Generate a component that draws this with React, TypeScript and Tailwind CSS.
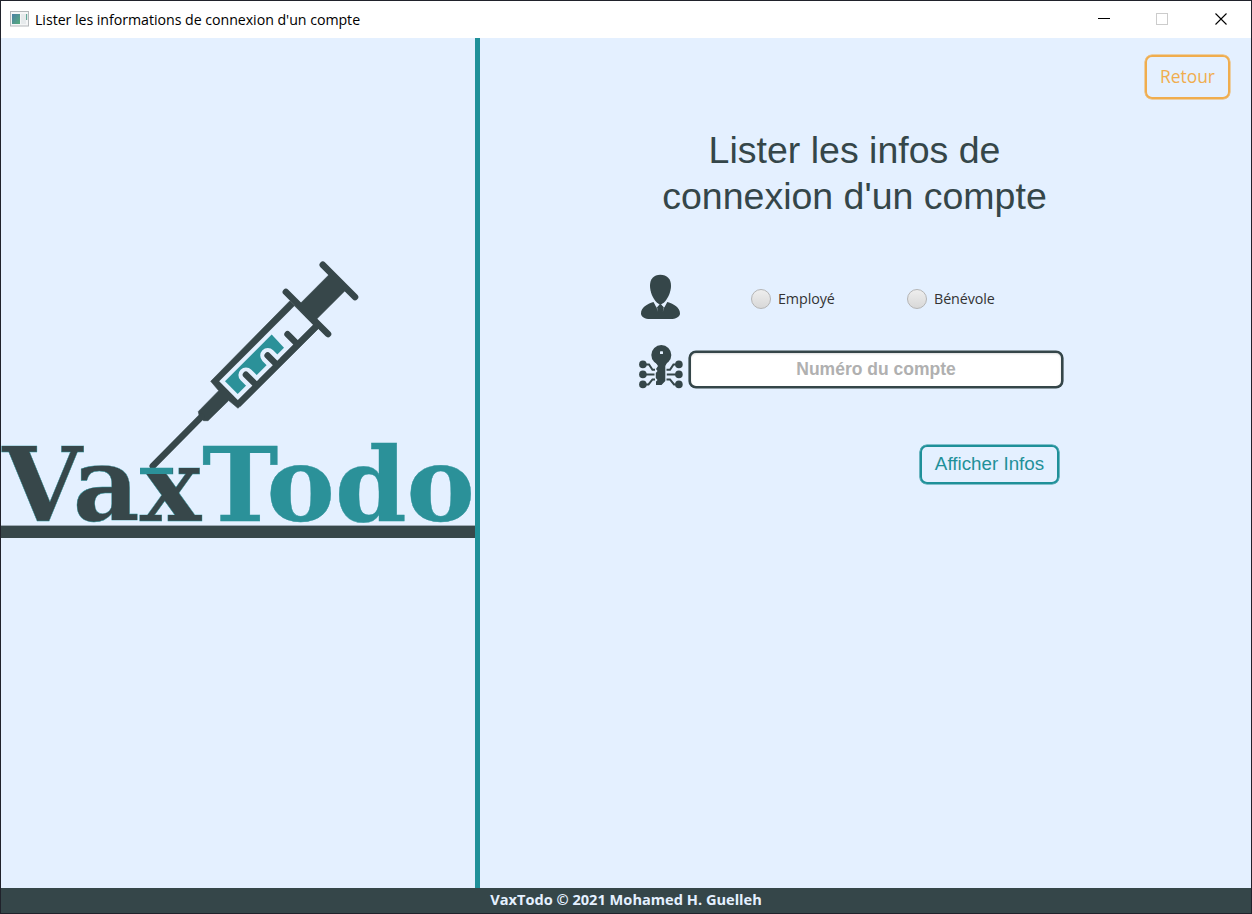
import React from "react";

const DARK = "#37474a";
const SLATE = "#354649";
const TEAL = "#2b9199";
const SKY = "#e4f0ff";

function AppIcon() {
  return (
    <svg width="19" height="16" viewBox="0 0 19 16" className="mb-[2px] shrink-0">
      <defs>
        <linearGradient id="app" x1="0" y1="0" x2="1" y2="1">
          <stop offset="0" stopColor="#4a7fa5" />
          <stop offset="1" stopColor="#57ad7c" />
        </linearGradient>
      </defs>
      <rect x="0.5" y="0.5" width="18" height="14.5" fill="#f5f6f7" stroke="#b4b8bb" />
      <rect x="2" y="3" width="8" height="10" fill="url(#app)" />
      <rect x="11" y="3" width="5" height="10" fill="#e6eaec" />
      <rect x="16" y="3" width="1.2" height="6" fill="#63a899" />
    </svg>
  );
}

function Logo() {
  return (
    <svg width="474" height="300" viewBox="1 250 474 300" className="block">
      <g fill={DARK} stroke={DARK} strokeWidth="0.6">
        <polygon points="330.2,273.5 346.5,289.2 316.2,319.5 300,303.8" />
        <polygon points="290,300.7 210.7,381.3 218.7,390.7 198.3,411.5 199,415 203.5,420.7 208,420.7 228.7,400.5 238,408.3 318.7,328.3" />
      </g>
      <polygon points="294.4,305.9 219.2,381.3 238,400.3 313.2,325" fill={SKY} />
      <g stroke={DARK} strokeLinecap="round" strokeWidth="6.6">
        <path d="M322.8 264.8 L355 297 M285.9 292 L328 334" />
        <path d="M201.5 416.8 L152.8 466" />
      </g>
      <polygon points="271.7,334.6 225,381.3 237.7,394 284,347.7" fill={TEAL} />
      <g stroke={SKY} strokeWidth="15.2" strokeLinecap="round">
        <path d="M246 375 L252 381 M267.8 355.6 L273.8 361.6" />
      </g>
      <path d="M238 404.5 L316.2 326.3" stroke={DARK} strokeWidth="6.4" />
      <g stroke={DARK} strokeWidth="6.4" strokeLinecap="round">
        <path d="M245.9 374.7 L255 383.8 M267.6 355.5 L276.6 364.5 M287.5 334.2 L297.5 344.2" />
      </g>
      <g
        fontFamily="'DejaVu Serif'"
        fontWeight="700"
        fontSize="102.5"
        stroke={TEAL}
        strokeWidth="0.4"
      >
        <text x="2.2" y="520.8" textLength="199" lengthAdjust="spacingAndGlyphs" fill={DARK}>
          Vax
        </text>
        <text x="202" y="520.8" textLength="273" lengthAdjust="spacingAndGlyphs" fill={TEAL}>
          Todo
        </text>
      </g>
      <rect x="140" y="468" width="32.5" height="6" fill={TEAL} />
      <rect x="1" y="525.6" width="474" height="12.4" fill={DARK} />
    </svg>
  );
}

function PersonIcon() {
  return (
    <svg width="40" height="46" viewBox="640 274 40 46" fill={SLATE}>
      <path d="M660.3 274.8 C667 274.8 671 279 671 285.5 C671 292 668 298.5 664 302.5 L660.3 305 L656.8 302.5 C652.8 298.5 650 292 650 285.5 C650 279 653.8 274.8 660.3 274.8Z" />
      <path d="M653.5 302 L656.2 307 L660.3 304 L664.6 307 L667.3 302 C674 304 680 307.5 680 313.5 C680 317 675.5 319 670.5 319 H650 C645 319 641 317 641 313.5 C641 307.5 647 304 653.5 302Z" />
      <path d="M655 302.5 L658.8 305.3 L657 307.3 L658 312Z M665.7 302.5 L662 305.3 L663.8 307.3 L662.8 312Z" fill={SKY} />
    </svg>
  );
}

function KeyIcon() {
  return (
    <svg width="44" height="44" viewBox="639 345 44 44" fill={SLATE}>
      <circle cx="661.3" cy="355" r="10" />
      <rect x="660" y="351.3" width="3" height="2.8" rx="0.6" fill={SKY} />
      <path d="M654 360 H668.5 L665.3 366 V381 L661.5 385 H656 V381.5 L657.5 380 L655.8 378 V373 L657.5 371 L656 369 L658 366Z" />
      <g>
        <circle cx="642.9" cy="364.4" r="3.8" />
        <circle cx="642.9" cy="374.4" r="3.8" />
        <circle cx="642.9" cy="384.4" r="3.8" />
        <circle cx="678.9" cy="364.4" r="3.8" />
        <circle cx="678.9" cy="374.4" r="3.8" />
        <circle cx="678.9" cy="384.4" r="3.8" />
      </g>
      <path
        d="M643 364.4 H649 L652.5 369.8 H655 M643 374.4 H654.5 M643 384.4 H648.5 L652.5 379.4 H655 M679 364.4 H673.5 L670 369.8 H666.5 M679 374.4 H666.8 M679 384.4 H674 L670 379.4 H666.5"
        fill="none"
        stroke={SLATE}
        strokeWidth="2"
      />
    </svg>
  );
}

function Radio({ label, className }: { label: string; className: string }) {
  return (
    <label className={`flex items-center gap-[7px] ${className}`}>
      <input
        type="radio"
        name="kind"
        className="size-5 shrink-0 appearance-none rounded-full border border-[#b5b5b5] bg-linear-to-b from-[#eeeeee] to-[#d8d8d8]"
      />
      <span className="whitespace-nowrap font-['Open_Sans',sans-serif] text-[14.3px] leading-5 tracking-[-0.1px] text-[#333333]">
        {label}
      </span>
    </label>
  );
}

export default function App() {
  return (
    <div className="flex h-[914px] w-[1252px] flex-col overflow-hidden border border-[#20222b] bg-[#e4f0ff]">
      <header className="flex h-[37px] shrink-0 items-center bg-white pl-[9px]">
        <AppIcon />
        <span className="ml-[6px] whitespace-nowrap pt-px font-['Open_Sans',sans-serif] text-[14.2px] leading-5 tracking-[-0.04px] text-black">
          Lister les informations de connexion d'un compte
        </span>
        <svg className="mb-[2px] ml-auto mr-[23px]" width="130" height="14" viewBox="0 0 130 14" fill="none">
          <path d="M0 6.5 H12" stroke="#000" />
          <rect x="58.5" y="1.5" width="11" height="11" stroke="#cccccc" />
          <path d="M117.5 1.5 L128.5 12.5 M128.5 1.5 L117.5 12.5" stroke="#000" strokeWidth="1.1" />
        </svg>
      </header>

      <div className="flex min-h-0 flex-1">
        <aside className="w-[479px] shrink-0 border-r-[5px] border-[#1f9099] pt-[212px]">
          <Logo />
        </aside>

        <main className="flex flex-1 flex-col">
          <div className="flex h-[61px] shrink-0 items-end justify-end pr-[21px]">
            <button className="h-[44px] w-[85px] rounded-[7px] border-2 border-[#f0ad4e] pb-[2px] font-['Open_Sans',sans-serif] text-[17.4px] text-[#f0ad4e] shadow-[0_0_0_0.5px_#f0ad4e]">
              Retour
            </button>
          </div>

          <h1 className="ml-[144px] mt-[28px] w-[461px] text-center font-['Liberation_Sans',sans-serif] text-[37.5px] leading-[46px] text-[#354649]">
            Lister les infos de
            <br />
            connexion d'un compte
          </h1>

          <div className="ml-[160px] mt-[55px] flex h-[46px] items-center">
            <PersonIcon />
            <Radio label="Employé" className="ml-[71px] w-[156px] pt-[3px]" />
            <Radio label="Bénévole" className="pt-[3px]" />
          </div>

          <div className="ml-[159px] mt-[25px] flex h-[44px] items-end">
            <KeyIcon />
            <input
              type="text"
              placeholder="Numéro du compte"
              className="mb-px ml-[6px] h-[37px] w-[374px] rounded-[7px] border-2 border-[#354649] bg-white text-center font-['Liberation_Sans',sans-serif] text-[17.5px] font-bold shadow-[0_0_0_0.6px_#354649,inset_0_1px_2px_#dddddd] outline-none placeholder:text-[#b0b0b0] placeholder:opacity-100"
            />
          </div>

          <button className="ml-[440px] mt-[56px] h-[39px] w-[139px] rounded-[7px] border-2 border-[#1f9099] font-['Liberation_Sans',sans-serif] text-[18.8px] text-[#1f9099] shadow-[0_0_0_0.6px_#1f9099]">
            Afficher Infos
          </button>
        </main>
      </div>

      <footer className="flex h-[25px] shrink-0 items-center justify-center bg-[#354649] pb-[2px] font-['Open_Sans',sans-serif] text-[14.6px] font-bold text-[#e4f0ff]">
        VaxTodo © 2021 Mohamed H. Guelleh
      </footer>
    </div>
  );
}
